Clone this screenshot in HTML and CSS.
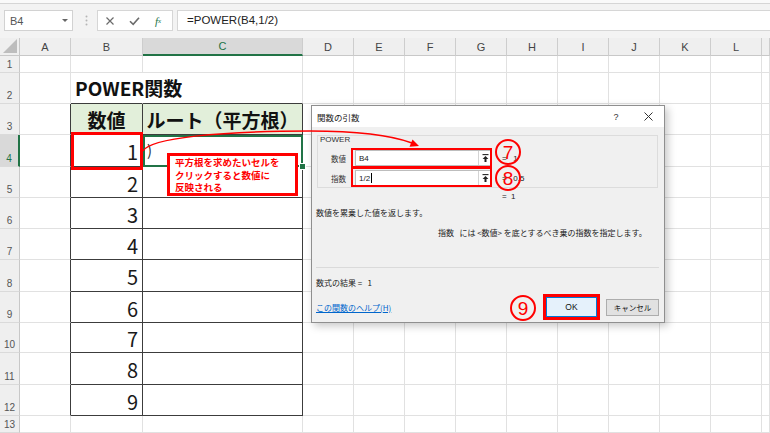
FILE: index.html
```html
<!DOCTYPE html>
<html lang="ja">
<head>
<meta charset="utf-8">
<title>POWER関数</title>
<link rel="stylesheet" href="styles.css">
</head>
<body>
<div class="topline"></div>
<div class="fbar">
  <div class="namebox"><span>B4</span><span class="dd"></span></div>
  <div class="grip"><svg width="3" height="11" viewBox="0 0 3 11"><circle cx="1.5" cy="1.5" r="1" fill="#b5b5b5"/><circle cx="1.5" cy="5.5" r="1" fill="#b5b5b5"/><circle cx="1.5" cy="9.5" r="1" fill="#b5b5b5"/></svg></div>
  <div class="fbtns">
    <span class="slot"><svg width="10" height="10" viewBox="0 0 10 10"><path d="M1.5 1.5l7 7M8.5 1.5l-7 7" stroke="#6b6b6b" stroke-width="1.2" fill="none"/></svg></span>
    <span class="slot"><svg width="11" height="10" viewBox="0 0 11 10"><path d="M1 5.2l3.2 3.2L10 1.8" stroke="#6b6b6b" stroke-width="1.6" fill="none"/></svg></span>
    <span class="slot fx">f<sub>x</sub></span>
  </div>
  <div class="finput">=POWER(B4,1/2)</div>
</div>

<div class="sheet">
  <div class="corner"><svg width="14" height="14" viewBox="0 0 14 14"><path d="M14 0V14H0Z" fill="#bdbdbd"/></svg></div>
  <div class="ch">A</div><div class="ch">B</div><div class="ch csel">C</div><div class="ch">D</div><div class="ch">E</div><div class="ch">F</div><div class="ch">G</div><div class="ch">H</div><div class="ch">I</div><div class="ch">J</div><div class="ch">K</div><div class="ch">L</div><div class="ch"></div>

  <div class="rh">1</div><div></div><div></div><div></div><div></div><div></div><div></div><div></div><div></div><div></div><div></div><div></div><div></div><div></div>

  <div class="rh">2</div><div></div><div class="tt nr title">POWER関数</div><div class="tt"></div><div></div><div></div><div></div><div></div><div></div><div></div><div></div><div></div><div></div><div></div>

  <div class="rh">3</div><div class="tl"></div><div class="t hd">数値</div><div class="t hd">ルート（平方根）</div><div></div><div></div><div></div><div></div><div></div><div></div><div></div><div></div><div></div><div></div>

  <div class="rh rsel">4</div><div class="tl"></div><div class="t num">1</div><div class="t act">)</div><div></div><div></div><div></div><div></div><div></div><div></div><div></div><div></div><div></div><div></div>

  <div class="rh">5</div><div class="tl"></div><div class="t num">2</div><div class="t"></div><div></div><div></div><div></div><div></div><div></div><div></div><div></div><div></div><div></div><div></div>

  <div class="rh">6</div><div class="tl"></div><div class="t num">3</div><div class="t"></div><div></div><div></div><div></div><div></div><div></div><div></div><div></div><div></div><div></div><div></div>

  <div class="rh">7</div><div class="tl"></div><div class="t num">4</div><div class="t"></div><div></div><div></div><div></div><div></div><div></div><div></div><div></div><div></div><div></div><div></div>

  <div class="rh">8</div><div class="tl"></div><div class="t num">5</div><div class="t"></div><div></div><div></div><div></div><div></div><div></div><div></div><div></div><div></div><div></div><div></div>

  <div class="rh">9</div><div class="tl"></div><div class="t num">6</div><div class="t"></div><div></div><div></div><div></div><div></div><div></div><div></div><div></div><div></div><div></div><div></div>

  <div class="rh">10</div><div class="tl"></div><div class="t num">7</div><div class="t"></div><div></div><div></div><div></div><div></div><div></div><div></div><div></div><div></div><div></div><div></div>

  <div class="rh">11</div><div class="tl"></div><div class="t num">8</div><div class="t"></div><div></div><div></div><div></div><div></div><div></div><div></div><div></div><div></div><div></div><div></div>

  <div class="rh">12</div><div class="tl"></div><div class="t num">9</div><div class="t"></div><div></div><div></div><div></div><div></div><div></div><div></div><div></div><div></div><div></div><div></div>

  <div class="rh">13</div><div></div><div></div><div></div><div></div><div></div><div></div><div></div><div></div><div></div><div></div><div></div><div></div><div></div>
</div>

<div class="note">平方根を求めたいセルを<br>クリックすると数値に<br>反映される</div>
<div class="b4box"></div>

<div class="dlg">
  <div class="dlg-title">
    <span class="dlg-name">関数の引数</span>
    <span class="tbtn">?</span>
    <span class="tbtn"><svg width="9" height="9" viewBox="0 0 9 9"><path d="M0.5 0.5l8 8M8.5 0.5l-8 8" stroke="#333" stroke-width="1" fill="none"/></svg></span>
  </div>
  <div class="dlg-body">
    <div class="grp">
      <div class="grp-label">POWER</div>
      <div class="arg">
        <span class="arg-label">数値</span>
        <div class="inp"><span class="val">B4</span><span class="up"><svg width="7" height="8" viewBox="0 0 7 8"><path d="M0.5 0.6h6" stroke="#222" stroke-width="1.1"/><path d="M3.5 2L0.6 5h1.9v3h2V5h1.9z" fill="#222"/></svg></span></div>
        <span class="res">=&nbsp;&nbsp;&nbsp;1</span>
      </div>
      <div class="arg">
        <span class="arg-label">指数</span>
        <div class="inp"><span class="val">1/2<span class="caret"></span></span><span class="up"><svg width="7" height="8" viewBox="0 0 7 8"><path d="M0.5 0.6h6" stroke="#222" stroke-width="1.1"/><path d="M3.5 2L0.6 5h1.9v3h2V5h1.9z" fill="#222"/></svg></span></div>
        <span class="res">=&nbsp;&nbsp;&nbsp;0.5</span>
      </div>
    </div>
    <div class="res3">=&nbsp;&nbsp;1</div>
    <div class="desc">数値を累乗した値を返します。</div>
    <div class="desc2">指数&nbsp;&nbsp;&nbsp;には &lt;数値&gt; を底とするべき乗の指数を指定します。</div>
    <div class="sep"></div>
    <div class="fres">数式の結果 =&nbsp;&nbsp;&nbsp;1</div>
    <div class="foot">
      <a class="help" href="#">この関数のヘルプ(H)</a>
      <div class="okwrap"><span class="okbtn">OK</span></div>
      <span class="cancel">キャンセル</span>
    </div>
  </div>
</div>

<svg class="arrow" width="770" height="433" viewBox="0 0 770 433">
  <path d="M143 151C150 138 220 131 310 131C360 131 393 136 412 143" stroke="#f00" stroke-width="1.5" fill="none"/>
  <path d="M419 146L409.5 146.8L412.5 139.6Z" fill="#f00"/>
</svg>

<div class="redbox rb1"></div>
<div class="redbox rb2"></div>
<div class="circ c7">7</div>
<div class="circ c8">8</div>
<div class="circ c9">9</div>
</body>
</html>
```

FILE: styles.css
```css
html, body {
  margin: 0;
  padding: 0;
  background: #ffffff;
  width: 770px;
  height: 433px;
  overflow: hidden;
  font-family: "Liberation Sans", "Noto Sans CJK JP", sans-serif;
}

.topline {
  height: 3px;
  background: #fafafa;
  border-bottom: 1px solid #d6d6d6;
}

.fbar {
  height: 34px;
  box-sizing: border-box;
  background: #f3f3f3;
  padding: 6px 0 0 4px;
  display: flex;
  align-items: flex-start;
}

.namebox {
  width: 69px;
  height: 21px;
  box-sizing: border-box;
  background: #fff;
  border: 1px solid #d2d2d2;
  display: flex;
  align-items: center;
  padding-left: 5px;
  font-size: 11px;
  color: #555;
}
.namebox span:first-child { flex: 1; }
.dd {
  width: 0;
  height: 0;
  border-left: 3px solid transparent;
  border-right: 3px solid transparent;
  border-top: 3px solid #666;
  margin-right: 4px;
}

.grip {
  width: 3px;
  height: 21px;
  margin-left: 12px;
  display: flex;
  align-items: center;
}

.fbtns {
  width: 76px;
  height: 21px;
  box-sizing: border-box;
  margin-left: 9px;
  background: #fff;
  border: 1px solid #d6d6d6;
  display: flex;
  align-items: center;
}
.slot {
  width: 24px;
  display: flex;
  justify-content: center;
  align-items: center;
}
.fx {
  font-family: "Liberation Serif", serif;
  font-style: italic;
  font-size: 11px;
  color: #217346;
}
.fx sub { font-size: 7px; vertical-align: -1px; }

.finput {
  flex: 1;
  height: 21px;
  box-sizing: border-box;
  margin-left: 4px;
  background: #fff;
  border: 1px solid #d6d6d6;
  border-right: none;
  padding-left: 9px;
  font-size: 11.5px;
  line-height: 19px;
  color: #222;
}

/* sheet */
.sheet {
  display: grid;
  grid-template-columns: 20px 51px 72px 160px repeat(9, 51px) 1fr;
  grid-template-rows: 18px 17px 31px 31px 32px 31px 31px 31px 32px 31px 30px 32px 31px 17px;
  font-family: "Noto Sans CJK JP", sans-serif;
  color: #111;
}
.sheet > div {
  box-sizing: border-box;
  border-right: 1px solid #e1e1e1;
  border-bottom: 1px solid #e1e1e1;
  min-width: 0;
  white-space: nowrap;
}
.sheet > .corner {
  background: #efefef;
  border-right-color: #c8c8c8;
  border-bottom-color: #c8c8c8;
  display: flex;
  align-items: flex-end;
  justify-content: flex-end;
  padding: 0 2px 2px 0;
}
.sheet > .ch {
  background: #efefef;
  border-right-color: #cdcdcd;
  border-bottom-color: #c8c8c8;
  display: flex;
  align-items: center;
  justify-content: center;
  font-family: "Liberation Sans", sans-serif;
  font-size: 11px;
  color: #444;
}
.sheet > .ch.csel {
  background: #d9d9d9;
  color: #217346;
  border-bottom: 2px solid #217346;
}
.sheet > .rh {
  background: #efefef;
  border-right-color: #c8c8c8;
  border-bottom-color: #dadada;
  display: flex;
  align-items: flex-end;
  justify-content: center;
  padding-bottom: 2px;
  font-family: "Liberation Sans", sans-serif;
  font-size: 10px;
  color: #555;
}
.sheet > .rh.rsel {
  background: #d9d9d9;
  color: #217346;
  border-right: 2px solid #217346;
}

.sheet > .tt { border-bottom-color: #3c3c3c; }
.sheet > .nr { border-right-color: transparent; }
.sheet > .tl { border-right-color: #3c3c3c; }
.sheet > .t {
  border-right-color: #3c3c3c;
  border-bottom-color: #3c3c3c;
}

.title {
  font-size: 19px;
  font-weight: 700;
  line-height: 30px;
  padding-left: 4px;
  overflow: visible;
}
.hd {
  background: #e2efda;
  font-size: 19px;
  font-weight: 700;
  display: flex;
  align-items: center;
  justify-content: center;
}
.num {
  display: flex;
  align-items: center;
  justify-content: flex-end;
  padding: 2px 4px 0 0;
  font-size: 20px;
  color: #1a1a1a;
}
.sheet > .act {
  position: relative;
  outline: 2px solid #217346;
  outline-offset: -2px;
  font-size: 15px;
  color: #333;
  padding: 4px 0 0 4px;
}
.act::after {
  content: "";
  position: absolute;
  right: -4px;
  bottom: -4px;
  width: 5px;
  height: 5px;
  background: #217346;
  border: 1px solid #fff;
}

/* annotations */
.note {
  position: absolute;
  left: 167px;
  top: 153px;
  width: 131px;
  height: 43px;
  box-sizing: border-box;
  border: 3px solid #f00;
  background: #fff;
  padding: 0 0 0 5px;
  font-family: "Noto Sans CJK JP", sans-serif;
  font-size: 9.5px;
  font-weight: 700;
  line-height: 12.5px;
  color: #f00;
  white-space: nowrap;
}
.b4box {
  position: absolute;
  left: 71px;
  top: 132px;
  width: 72px;
  height: 38px;
  box-sizing: border-box;
  border: 3px solid #f00;
}

/* dialog */
.dlg {
  position: absolute;
  left: 311px;
  top: 105px;
  width: 354px;
  height: 218px;
  box-sizing: border-box;
  border: 1px solid #8f8f8f;
  background: #f0f0f0;
  box-shadow: 3px 3px 8px rgba(0, 0, 0, 0.22);
  font-family: "Liberation Sans", "Noto Sans CJK JP", sans-serif;
  font-size: 8px;
  color: #222;
  display: flex;
  flex-direction: column;
}
.dlg-title {
  height: 21px;
  flex: none;
  background: #fff;
  display: flex;
  align-items: center;
  padding-left: 5px;
}
.dlg-name {
  flex: 1;
  font-family: "Noto Sans CJK JP", sans-serif;
  font-size: 8.5px;
  color: #222;
}
.tbtn {
  width: 32px;
  display: flex;
  justify-content: center;
  align-items: center;
  font-size: 9px;
  color: #333;
}

.dlg-body {
  flex: 1;
  padding: 0 5px 0 4px;
  display: flex;
  flex-direction: column;
}
.grp {
  margin: 8px 1px 0 1px;
  height: 53px;
  box-sizing: border-box;
  border: 1px solid #dcdcdc;
  padding-left: 2px;
}
.grp-label {
  height: 10px;
  line-height: 10px;
  margin-top: -1px;
  font-size: 8px;
  color: #333;
}
.arg {
  height: 16px;
  margin-top: 4px;
  padding-left: 11px;
  display: flex;
  align-items: center;
}
.grp-label + .arg { margin-top: 5px; }
.arg-label {
  width: 22px;
  font-family: "Noto Sans CJK JP", sans-serif;
  font-size: 7.5px;
  color: #333;
}
.inp {
  width: 137px;
  height: 16px;
  box-sizing: border-box;
  margin-left: 2px;
  background: #fff;
  border: 1px solid #bdbdbd;
  display: flex;
  align-items: center;
}
.val {
  flex: 1;
  padding-left: 3px;
  font-size: 8px;
  display: flex;
  align-items: center;
}
.caret {
  display: inline-block;
  width: 1px;
  height: 10px;
  background: #000;
  margin-left: 0.5px;
}
.up {
  width: 12px;
  height: 14px;
  border-left: 1px solid #d4d4d4;
  display: flex;
  align-items: center;
  justify-content: center;
}
.res {
  margin-left: 10px;
  font-size: 8px;
  color: #222;
}
.res3 {
  margin-top: 4px;
  height: 10px;
  line-height: 10px;
  padding-left: 186px;
}
.desc {
  margin-top: 6px;
  height: 10px;
  line-height: 10px;
  font-family: "Noto Sans CJK JP", sans-serif;
}
.desc2 {
  margin-top: 10px;
  height: 10px;
  line-height: 10px;
  padding-left: 122px;
  font-family: "Noto Sans CJK JP", sans-serif;
}
.sep {
  margin-top: 29px;
  height: 0;
  border-top: 1px solid #dadada;
}
.fres {
  margin-top: 10px;
  height: 10px;
  line-height: 10px;
  font-family: "Noto Sans CJK JP", sans-serif;
}
.foot {
  margin-top: 6px;
  height: 26px;
  display: flex;
  align-items: center;
}
.help {
  flex: 1;
  color: #0066cc;
  text-decoration: underline;
  font-family: "Noto Sans CJK JP", sans-serif;
  font-size: 8px;
}
.okwrap {
  width: 57px;
  height: 26px;
  box-sizing: border-box;
  border: 3px solid #f00;
  display: flex;
}
.okbtn {
  flex: 1;
  background: #e5f1fb;
  border: 1px solid #0078d7;
  display: flex;
  align-items: center;
  justify-content: center;
  font-size: 8.5px;
  color: #111;
}
.cancel {
  margin-left: 6px;
  width: 53px;
  height: 17px;
  box-sizing: border-box;
  background: #e1e1e1;
  border: 1px solid #adadad;
  display: flex;
  align-items: center;
  justify-content: center;
  font-family: "Noto Sans CJK JP", sans-serif;
  font-size: 7.5px;
  color: #111;
}

/* overlays on top of dialog */
.arrow {
  position: absolute;
  left: 0;
  top: 0;
  pointer-events: none;
}
.redbox {
  position: absolute;
  left: 351px;
  width: 141px;
  height: 20px;
  box-sizing: border-box;
  border: 2px solid #f00;
}
.rb1 { top: 148px; }
.rb2 { top: 167px; }
.circ {
  position: absolute;
  width: 26px;
  height: 26px;
  box-sizing: border-box;
  border: 2px solid #f00;
  border-radius: 50%;
  display: flex;
  align-items: center;
  justify-content: center;
  font-family: "Liberation Sans", sans-serif;
  font-size: 19px;
  line-height: 1;
  color: #f00;
}
.c7 { left: 495px; top: 139px; }
.c8 { left: 495px; top: 165px; }
.c9 { left: 510px; top: 295px; }
```
